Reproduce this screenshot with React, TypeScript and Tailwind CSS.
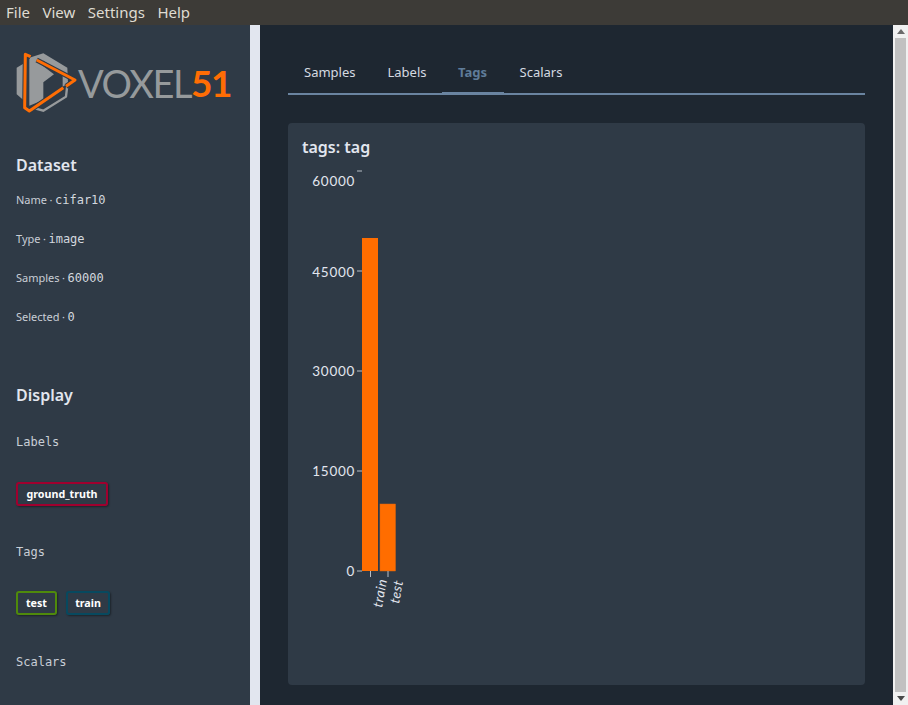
import React from 'react';

const uiFont = "font-['Noto_Sans','Open_Sans',sans-serif]";
const monoFont = "font-['DejaVu_Sans_Mono',monospace]";

const menuItems = ['File', 'View', 'Settings', 'Help'];
const tabs = ['Samples', 'Labels', 'Tags', 'Scalars'];
const info = [
  { name: 'Name', value: 'cifar10' },
  { name: 'Type', value: 'image' },
  { name: 'Samples', value: '60000' },
  { name: 'Selected', value: '0' },
];

function Logo() {
  return (
    <div className="-ml-[6px] flex h-[75px] items-center">
      {/* drawn on a 3x grid, hence the viewBox */}
      <svg width="70" height="75" viewBox="0 0 210 225" className="shrink-0">
        <path d="M20 68 L40 56 L40 165 L20 148 Z" fill="#979a9c" />
        <path d="M58 38 L100 25 L172 68 L174 115 L158 125 L158 84 L100 47 L84 52 L132 88 L100 112 L100 165 L58 182 Z" fill="#979a9c" />
        <path d="M75 190 L100 197 L168 155 L172 120" fill="none" stroke="#979a9c" strokeWidth="7" />
        <path d="M62 35 L46 28 L44 188 L58 198 L160 128" fill="none" stroke="#2f3a46" strokeWidth="15" strokeLinejoin="round" />
        <path d="M80 45 L195 105 L168 124" fill="none" stroke="#2f3a46" strokeWidth="15" strokeLinejoin="round" />
        <path d="M62 35 L46 28 L44 188 L58 198 L160 128" fill="none" stroke="#ff6d04" strokeWidth="9" strokeLinejoin="round" />
        <path d="M80 45 L195 105 L168 124" fill="none" stroke="#ff6d04" strokeWidth="9" strokeLinejoin="round" />
      </svg>
      <span className="-ml-[2px] flex font-['Lato',sans-serif] text-[38px] leading-none tracking-[-1.5px]">
        <span className="text-[#969a9c]">VOXEL</span>
        <span className="text-[37px] font-bold text-[#ff6d04]">51</span>
      </span>
    </div>
  );
}

function Tag({ label, border, width }: { label: string; border: string; width: string }) {
  return (
    <div className={`flex h-[24px] items-center justify-center rounded-[3px] border-2 ${border} ${width} font-['Noto_Sans',sans-serif] text-[10.7px] font-bold text-white shadow-[1px_1px_2px_rgba(0,0,0,0.4)]`}>
      {label}
    </div>
  );
}

function TagsChart() {
  const ticks = [
    { label: '60000', y: 181, tick: 171 },
    { label: '45000', y: 272, tick: 271 },
    { label: '30000', y: 371, tick: 371 },
    { label: '15000', y: 471, tick: 471 },
    { label: '0', y: 571, tick: 571 },
  ];
  return (
    <svg width="120" height="460" viewBox="296 160 120 460" className="mt-[2px] -ml-[6px] block">
      {ticks.map((t) => (
        <g key={t.label}>
          <line x1="357" x2="362" y1={t.tick} y2={t.tick} stroke="#b8bec5" strokeWidth="1" />
          <text x="355" y={t.y + 4.5} textAnchor="end" fill="#e2e6ef" fontFamily="Lato, sans-serif" letterSpacing="0.7" fontSize="13.5">
            {t.label}
          </text>
        </g>
      ))}
      <rect x="362" y="238" width="16" height="333" fill="#ff6d00" />
      <rect x="380" y="504" width="15.5" height="67" fill="#ff6d00" stroke="#d9640c" strokeWidth="0.5" />
      <line x1="370.5" x2="370.5" y1="571" y2="577" stroke="#b8bec5" />
      <line x1="388" x2="388" y1="571" y2="577" stroke="#b8bec5" />
      <text transform="translate(382 608) rotate(-80)" fill="#e2e6ef" fontFamily="Lato, sans-serif" fontStyle="italic" letterSpacing="0.5" fontSize="13.5">
        train
      </text>
      <text transform="translate(399 604) rotate(-80)" fill="#e2e6ef" fontFamily="Lato, sans-serif" fontStyle="italic" letterSpacing="0.5" fontSize="13.5">
        test
      </text>
    </svg>
  );
}

export default function App() {
  return (
    <div className={`flex h-[705px] w-[908px] flex-col overflow-hidden ${uiFont}`}>
      <div className="flex h-[25px] shrink-0 items-center gap-[12.5px] bg-[#3d3b37] pl-[6px] text-[15px] text-[#dfdbd2]">
        {menuItems.map((item) => (
          <span key={item}>{item}</span>
        ))}
      </div>

      <div className="flex min-h-0 flex-1">
        <aside className="flex w-[250px] shrink-0 flex-col bg-[#2f3a46] pl-[16px]">
          <div className="mt-[20px]">
            <Logo />
          </div>
          <h2 className="mt-[33px] text-[16px] leading-[24px] font-semibold text-[#e2e6ef]">Dataset</h2>
          <div className="mt-[13px] flex flex-col gap-[19px]">
            {info.map((row) => (
              <div key={row.name} className="flex h-[20px] items-center text-[11px] text-[#c9ced6]">
                <span>{row.name}</span>
                <span className="mx-[2.5px]">·</span>
                <span className={`${monoFont} text-[12px] text-[#d3d8df]`}>{row.value}</span>
              </div>
            ))}
          </div>
          <h2 className="mt-[56px] text-[16px] leading-[24px] font-semibold text-[#e2e6ef]">Display</h2>
          <div className={`mt-[25px] ${monoFont} text-[12px] leading-[20px] text-[#c9ced6]`}>Labels</div>
          <div className="mt-[30px] flex">
            <Tag label="ground_truth" border="border-[#a0002e]" width="w-[92px]" />
          </div>
          <div className={`mt-[36px] ${monoFont} text-[12px] leading-[20px] text-[#c9ced6]`}>Tags</div>
          <div className="mt-[29px] flex gap-[9px]">
            <Tag label="test" border="border-[#4f8a0b]" width="w-[41px]" />
            <Tag label="train" border="border-[#07495f]" width="w-[44px]" />
          </div>
          <div className={`mt-[37px] ${monoFont} text-[12px] leading-[20px] text-[#c9ced6]`}>Scalars</div>
        </aside>

        <div className="w-[10px] shrink-0 bg-[#e2e6ef]" />

        <main className="flex flex-1 flex-col bg-[#1e2731] pt-[28px] pr-[28px] pl-[28px]">
          <nav className="flex h-[42px] border-b-2 border-[#6a84a0]">
            {tabs.map((tab) => (
              <div
                key={tab}
                className={
                  tab === 'Tags'
                    ? '-ml-[1px] flex h-[42px] w-[62px] items-center justify-center border-b-[3px] border-[#6a84a0] text-[13px] font-bold text-[#5f7c99]'
                    : 'flex h-[40px] items-center px-[16px] text-[13px] text-[#d5dae1]'
                }
              >
                {tab}
              </div>
            ))}
          </nav>
          <section className="mt-[28px] h-[562px] rounded-[4px] bg-[#2f3a46] pt-[13px] pl-[14px]">
            <h3 className="text-[16px] leading-[22px] font-semibold text-[#e2e6ef]">tags: tag</h3>
            <TagsChart />
          </section>
        </main>

        <div className="flex w-[15px] shrink-0 flex-col items-center bg-[#f1f1f1] py-[4px]">
          <div className="h-0 w-0 border-x-[4px] border-b-[5px] border-x-transparent border-b-[#6b6b6b]" />
          <div className="my-[4px] w-[11px] flex-1 bg-[#c1c1c1]" />
          <div className="h-0 w-0 border-x-[4px] border-t-[5px] border-x-transparent border-t-[#4a4a4a]" />
        </div>
      </div>
    </div>
  );
}
